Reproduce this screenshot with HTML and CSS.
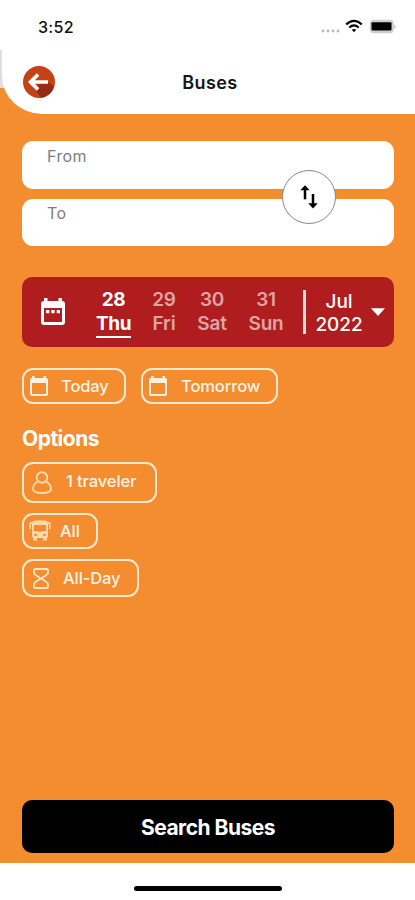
FILE: index.html
```html
<!DOCTYPE html>
<html lang="en">

<head>
    <meta charset="UTF-8">
    <meta name="viewport" content="width=device-width, initial-scale=1.0">
    <title>Buses</title>
    <link rel="stylesheet" href="styles.css">
</head>

<body>
    <div class="top">
        <div class="status">
            <span class="time">3:52</span>
            <div class="status-icons">
                <svg class="signal" width="20" height="4" viewBox="0 0 20 4" fill="#b9b9b9">
                    <circle cx="2" cy="2" r="1.4"/><circle cx="7" cy="2" r="1.4"/><circle cx="12" cy="2" r="1.4"/><circle cx="17" cy="2" r="1.4"/>
                </svg>
                <svg class="wifi" width="18" height="14" viewBox="0 0 18 14" fill="none" stroke="#000" stroke-width="2.1">
                    <path d="M1.2 5.4Q9-1.7 16.8 5.4"/>
                    <path d="M4.3 8.6Q9 4.3 13.7 8.6"/>
                    <path d="M9 13.2L6.8 10.8Q9 9 11.2 10.8Z" fill="#000" stroke="none"/>
                </svg>
                <svg width="28" height="15" viewBox="0 0 28 15">
                    <rect x=".8" y=".8" width="24" height="13.4" rx="4" fill="#cfcfcf"/>
                    <path d="M25.6 5q1.8 2.5 0 5z" fill="#999"/>
                    <rect x="2.5" y="3.3" width="20" height="8.2" rx="1" fill="#000"/>
                </svg>
            </div>
        </div>
        <header>
            <button class="back" aria-label="Back">
                <svg width="32" height="32" viewBox="0 0 32 32">
                    <circle cx="16" cy="16" r="16" fill="#c64216"/>
                    <path d="M25 16l6 4.500A16 16 0 0 1 18 31.800L12 23l5-6z" fill="#972b12"/>
                    <path d="M25 16H8M15 8.500L7.500 16l7.500 7.500" fill="none" stroke="#fff" stroke-width="3.600"/>
                </svg>
            </button>
            <h1>Buses</h1>
        </header>
    </div>

    <main>
        <form class="route">
            <div class="field">From</div>
            <div class="field">To</div>
            <button type="button" class="swap" aria-label="Swap">
                <svg width="18" height="24" viewBox="0 0 18 24" fill="none" stroke="#000" stroke-width="2.5">
                    <path d="M5 14.300V3"/>
                    <path d="M13 9v11"/>
                    <path d="M.3 5.300L5 .2l4.700 5.100zM8.300 18.300L13 23.500l4.700-5.200z" fill="#000" stroke="none"/>
                </svg>
            </button>
        </form>

        <div class="dates">
            <svg class="calendar" width="26" height="30" viewBox="0 0 26 30">
                <path fill="#fff" fill-rule="evenodd" d="M4 1h3.500v3h11V1H22v3a3 3 0 0 1 3 3v18a3 3 0 0 1-3 3H4a3 3 0 0 1-3-3V7a3 3 0 0 1 3-3zM4 11v14h18V11z"/>
                <path fill="#fff" d="M6 13h3.300v3.300H6zM11.300 13h3.300v3.300h-3.300zM16.700 13H20v3.300h-3.300z"/>
            </svg>
            <div class="day active">28<span>Thu</span></div>
            <div class="day">29<span>Fri</span></div>
            <div class="day">30<span>Sat</span></div>
            <div class="day sunday">31<span>Sun</span></div>
            <div class="month">Jul<span>2022</span></div>
            <svg class="caret" width="14" height="8" viewBox="0 0 14 8"><path d="M0 .3h14L7 8z" fill="#fff"/></svg>
        </div>

        <div class="quick">
            <button class="chip today">
                <svg width="20" height="22" viewBox="0 0 20 22"><path fill="#fff0dd" fill-rule="evenodd" d="M3 1h2.500v2h9V1H17v2a2 2 0 0 1 2 2v14a2 2 0 0 1-2 2H3a2 2 0 0 1-2-2V5a2 2 0 0 1 2-2zM3 8v11h14V8z"/></svg>
                <span>Today</span>
            </button>
            <button class="chip tomorrow">
                <svg width="20" height="22" viewBox="0 0 20 22"><path fill="#fff0dd" fill-rule="evenodd" d="M3 1h2.500v2h9V1H17v2a2 2 0 0 1 2 2v14a2 2 0 0 1-2 2H3a2 2 0 0 1-2-2V5a2 2 0 0 1 2-2zM3 8v11h14V8z"/></svg>
                <span>Tomorrow</span>
            </button>
        </div>

        <h2>Options</h2>
        <div class="options">
            <button class="chip traveler">
                <svg width="20" height="23" viewBox="0 0 20 23" fill="none" stroke="#ffd9ac" stroke-width="1.900">
                    <circle cx="10" cy="6.500" r="5.300"/>
                    <path d="M6 10.500C3 12 1 15 1 18c0 3 4 4 9 4s9-1 9-4c0-3-2-6-5-7.500"/>
                </svg>
                <span>1 traveler</span>
            </button>
            <button class="chip all">
                <svg width="22" height="22" viewBox="0 0 22 22" fill="#ffd9ac">
                    <path fill-rule="evenodd" d="M5 .8Q11-.5 17 .8 19 1.200 19 3v13q0 2-2 2H5q-2 0-2-2V3Q3 1.200 5 .8zM5 5V11q6 1.500 12 0V5zM5 14v1.800h3V14zM14 14v1.800h3V14z"/>
                    <path d="M4 17h4v3.500H4zM14 17h4v3.500h-4z"/>
                    <path d="M3.500 3.200H1.200V9M18.500 3.200h2.300V9" fill="none" stroke="#ffd9ac" stroke-width="1.700"/>
                </svg>
                <span>All</span>
            </button>
            <button class="chip all-day">
                <svg width="16" height="21" viewBox="0 0 16 21" fill="none" stroke="#ffe6c8" stroke-width="1.900" stroke-linejoin="round">
                    <path d="M2.500 1h11q1.500 0 1.500 1.500V5q0 1.500-7 5.500-7-4-7-5.500V2.500Q1 1 2.500 1zM8 10.500q7 4 7 5.500v2.500q0 1.500-1.500 1.500h-11Q1 20 1 18.500V16q0-1.500 7-5.500z"/>
                </svg>
                <span>All-Day</span>
            </button>
        </div>

        <button class="search">Search Buses</button>
    </main>

    <footer>
        <div class="home-bar"></div>
    </footer>
</body>

</html>
```

FILE: styles.css
```css
* {
    box-sizing: border-box;
}

body {
    margin: 0;
    height: 900px;
    display: flex;
    flex-direction: column;
    background-color: #f48c30;
    font-family: Inter, "Liberation Sans", sans-serif;
    color: white;
}

button {
    font-family: inherit;
    color: inherit;
    padding: 0;
    border: none;
    background: none;
    cursor: pointer;
}

svg {
    display: block;
    flex: none;
}

/* white top area, the grey strip shows on the left of the header */
.top {
    height: 114px;
    background: linear-gradient(#fff 50px, #dedede 50px, #dedede 88px, #f48c30 88px);
}

.status {
    height: 50px;
    display: flex;
    justify-content: space-between;
    padding: 17px 18px 0 38px;
    background-color: white;
    color: #111;
}

.time {
    font-size: 16px;
    font-weight: 500;
    line-height: 21px;
    letter-spacing: 0.3px;
}

.status-icons {
    display: flex;
    align-items: flex-start;
    padding-top: 2px;
}

.signal {
    margin: 10px 4px 0 0;
}

.wifi {
    margin-right: 6px;
}

header {
    height: 64px;
    margin-left: 2px;
    padding: 0 18px 0 21px;
    display: grid;
    grid-template-columns: 32px 1fr 32px;
    align-items: center;
    background-color: white;
    border-bottom-left-radius: 40px 38px;
}

h1 {
    margin: 0;
    font-size: 18px;
    font-weight: 600;
    text-align: center;
    letter-spacing: 0.4px;
    color: #161616;
}

main {
    flex: 1;
    display: flex;
    flex-direction: column;
    padding: 27px 21px 10px 22px;
}

.route {
    display: grid;
    gap: 10px;
    position: relative;
}

.field {
    height: 47.5px;
    padding: 5px 25px;
    border-radius: 11px;
    background-color: white;
    color: #7d7d7d;
    font-size: 16px;
    line-height: 20px;
    letter-spacing: 0.4px;
}

.field + .field {
    padding-top: 4px;
}

.swap {
    position: absolute;
    top: 29px;
    right: 58px;
    width: 54px;
    height: 54px;
    display: grid;
    place-items: center;
    border: 1px solid #888;
    border-radius: 50%;
    background-color: white;
}

.dates {
    height: 70px;
    margin-top: 31px;
    display: flex;
    padding: 11px 9px 0 18px;
    border-radius: 10px;
    background-color: #b01d1f;
    font-size: 19px;
    line-height: 24px;
    text-align: center;
}

.calendar {
    margin: 9px 30px 0 0;
}

.day {
    width: 32px;
    margin-right: 16px;
    display: flex;
    flex-direction: column;
    align-items: center;
    font-weight: 600;
    letter-spacing: -0.2px;
    color: #dfa5a5;
}

.day.active {
    width: 35px;
    margin-right: 17px;
    font-weight: 700;
    letter-spacing: -0.4px;
    color: white;
}

.day.active span {
    border-bottom: 2px solid white;
}

.day.sunday {
    width: 36px;
    margin: 0 19px 0 4px;
}

.month {
    height: 44px;
    margin-top: 2px;
    width: 59px;
    padding-left: 10px;
    border-left: 3px solid #f6dede;
    display: flex;
    flex-direction: column;
    align-items: center;
    font-weight: 500;
    line-height: 23px;
    letter-spacing: -0.1px;
}

.caret {
    margin: 20px 0 0 auto;
}

.quick {
    margin-top: 21px;
    display: flex;
    gap: 15px;
}

.chip {
    display: flex;
    align-items: center;
    border: 2px solid #ffe9cf;
    border-radius: 11px;
    font-size: 16.5px;
    font-weight: 500;
    letter-spacing: -0.1px;
    color: #fff4e6;
    white-space: nowrap;
}

.today, .tomorrow {
    height: 36px;
    padding-left: 5px;
    gap: 12px;
}

.today {
    width: 104px;
}

.tomorrow {
    width: 137px;
}

.tomorrow span {
    margin-left: 1px;
}

h2 {
    margin: 22px 0 11px;
    font-size: 21px;
    font-weight: 700;
    line-height: 25px;
    letter-spacing: -0.5px;
}

.options {
    display: flex;
    flex-direction: column;
    gap: 10px;
}

.traveler {
    width: 135px;
    height: 41px;
    padding-left: 8px;
    gap: 14px;
}

.traveler span {
    margin-top: -4px;
}

.all {
    width: 76px;
    height: 36px;
    padding-left: 5px;
    gap: 9px;
}

.all-day {
    width: 117px;
    height: 38px;
    padding-left: 9px;
    gap: 14px;
}

.search {
    height: 53px;
    margin-top: auto;
    padding-top: 2px;
    border-radius: 10px;
    background-color: black;
    font-size: 21px;
    font-weight: 700;
    letter-spacing: -0.5px;
}

footer {
    height: 37px;
    padding-top: 23px;
    background-color: white;
}

.home-bar {
    width: 148px;
    height: 5px;
    margin: 0 auto;
    border-radius: 3px;
    background-color: black;
}
```
